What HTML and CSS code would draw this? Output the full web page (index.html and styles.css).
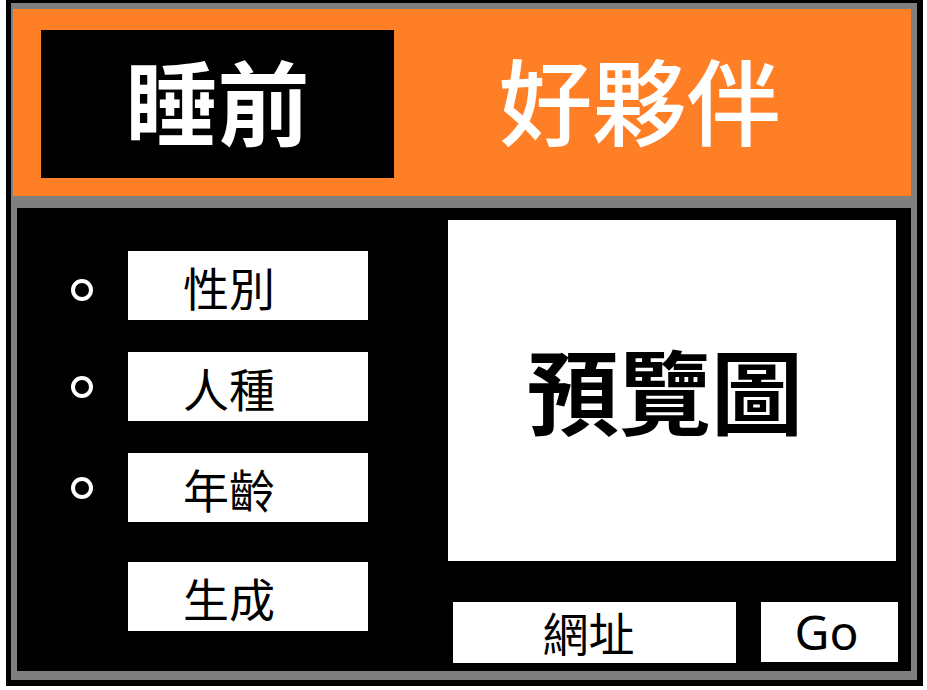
FILE: index.html
```html
<!DOCTYPE html>
<html lang="zh-Hant">
<head>
    <meta charset="UTF-8">
    <meta name="viewport" content="width=device-width, initial-scale=1.0">
    <title>睡前好夥伴</title>
    <link rel="stylesheet" href="styles.css">
</head>
<body>
    <div class="frame">
        <div class="panel">
            <div class="header">
                <div class="logo-box">睡前</div>
                <div class="title">好夥伴</div>
            </div>
            <div class="main">
                <div class="options">
                    <div class="option">
                        <span class="dot"></span>
                        <button class="opt-btn">性別</button>
                    </div>
                    <div class="option">
                        <span class="dot"></span>
                        <button class="opt-btn">人種</button>
                    </div>
                    <div class="option">
                        <span class="dot"></span>
                        <button class="opt-btn">年齡</button>
                    </div>
                    <div class="option generate">
                        <button class="opt-btn">生成</button>
                    </div>
                </div>
                <div class="preview-col">
                    <div class="preview">預覽圖</div>
                    <div class="url-row">
                        <div class="url-box">網址</div>
                        <button class="go-btn">Go</button>
                    </div>
                </div>
            </div>
        </div>
    </div>
</body>
</html>
```

FILE: styles.css
```css
body {
    margin: 0;
    padding: 0;
    background: white;
    font-family: "Noto Sans CJK TC", "Noto Sans", sans-serif;
}
.frame {
    box-sizing: border-box;
    width: 917px;
    height: 686px;
    margin-left: 6px;
    padding: 3px 6px 6px 5px;
    background: black;
}
.panel {
    box-sizing: border-box;
    height: 677px;
    padding: 6px 6px 9px 2px;
    background: #7f7f7f;
    display: flex;
    flex-direction: column;
    gap: 12px;
}
.header {
    box-sizing: border-box;
    height: 187px;
    padding: 21px 0 0 28px;
    background: #ff7f27;
    display: flex;
    align-items: flex-start;
}
.logo-box {
    width: 353px;
    height: 148px;
    background: black;
    color: white;
    font-size: 92px;
    font-weight: 700;
    line-height: 138px;
    text-align: center;
}
.title {
    flex: 1;
    height: 148px;
    padding-right: 26px;
    color: white;
    font-size: 94px;
    font-weight: 500;
    line-height: 136px;
    text-align: center;
}
.main {
    flex: 1;
    margin-left: 4px;
    padding: 12px 15px 0 54px;
    background: black;
    display: flex;
}
.options {
    width: 297px;
    padding-top: 31px;
    display: flex;
    flex-direction: column;
    gap: 32px;
}
.option {
    display: flex;
    align-items: center;
    gap: 35px;
}
.option:first-child .dot {
    margin-top: 8px;
}
.option.generate {
    margin-top: 8px;
    padding-left: 57px;
}
.dot {
    box-sizing: border-box;
    width: 22px;
    height: 22px;
    border: 4px solid white;
    border-radius: 50%;
}
.opt-btn {
    width: 240px;
    height: 69px;
    padding: 0 38px 0 0;
    border: none;
    background: white;
    color: black;
    font-family: inherit;
    font-size: 46px;
    line-height: 66px;
    text-align: center;
}
.preview-col {
    margin-left: 80px;
    display: flex;
    flex-direction: column;
}
.preview {
    box-sizing: border-box;
    width: 448px;
    height: 341px;
    padding-right: 14px;
    background: white;
    color: black;
    font-size: 92px;
    font-weight: 700;
    line-height: 336px;
    text-align: center;
}
.url-row {
    margin-top: 41px;
    padding-left: 5px;
    display: flex;
    gap: 25px;
}
.url-box {
    width: 283px;
    height: 61px;
    padding-right: 12px;
    box-sizing: border-box;
    background: white;
    color: black;
    font-size: 46px;
    line-height: 58px;
    text-align: center;
}
.go-btn {
    width: 137px;
    height: 60px;
    padding: 0 6px 0 0;
    border: none;
    background: white;
    color: black;
    font-family: "Noto Sans", sans-serif;
    font-size: 48px;
    line-height: 58px;
}
```
